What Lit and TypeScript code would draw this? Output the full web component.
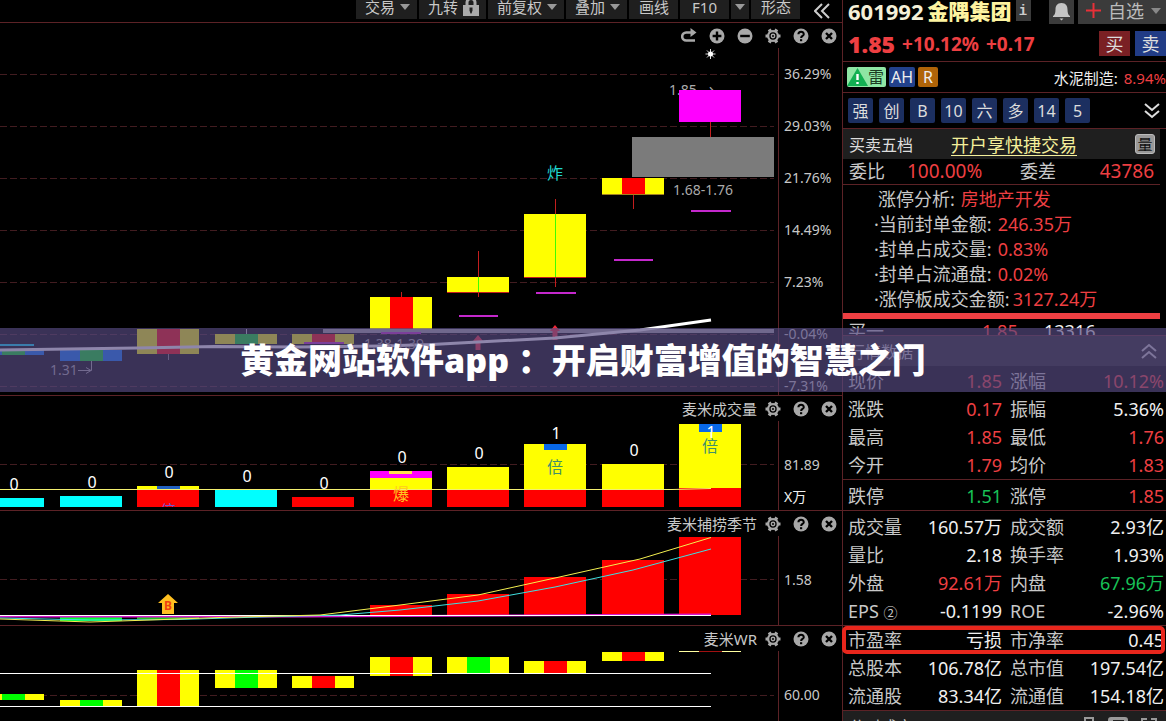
import { LitElement, html, svg, css } from "lit";
import { customElement } from "lit/decorators.js";

type Tone = "red" | "green" | "white";
type Pair = [string, string, Tone];

const COLUMNS = [-18, 60, 137, 215, 292, 370, 447, 524, 602, 679];
const BAR = 62;

const toolbar: { label: string; mark?: "caret" | "lock" }[] = [
  { label: "交易", mark: "caret" },
  { label: "九转", mark: "lock" },
  { label: "前复权", mark: "caret" },
  { label: "叠加", mark: "caret" },
  { label: "画线" },
  { label: "F10" },
  { label: "", mark: "caret" },
  { label: "形态" },
];

const analysis: [string, string][] = [
  ["涨停分析:", "房地产开发"],
  ["·当前封单金额:", "246.35万"],
  ["·封单占成交量:", "0.83%"],
  ["·封单占流通盘:", "0.02%"],
  ["·涨停板成交金额:", "3127.24万"],
];

const quoteGroups: { cls: string; rows: [Pair, Pair][] }[] = [
  {
    cls: "first",
    rows: [
      [["现价", "1.85", "red"], ["涨幅", "10.12%", "red"]],
      [["涨跌", "0.17", "red"], ["振幅", "5.36%", "white"]],
      [["最高", "1.85", "red"], ["最低", "1.76", "red"]],
      [["今开", "1.79", "red"], ["均价", "1.83", "red"]],
    ],
  },
  { cls: "", rows: [[["跌停", "1.51", "green"], ["涨停", "1.85", "red"]]] },
  {
    cls: "",
    rows: [
      [["成交量", "160.57万", "white"], ["成交额", "2.93亿", "white"]],
      [["量比", "2.18", "white"], ["换手率", "1.93%", "white"]],
      [["外盘", "92.61万", "red"], ["内盘", "67.96万", "green"]],
      [["EPS", "-0.1199", "white"], ["ROE", "-2.96%", "white"]],
    ],
  },
  {
    cls: "tight",
    rows: [
      [["市盈率", "亏损", "white"], ["市净率", "0.45", "white"]],
      [["总股本", "106.78亿", "white"], ["总市值", "197.54亿", "white"]],
      [["流通股", "83.34亿", "white"], ["流通值", "154.18亿", "white"]],
    ],
  },
];

const glyphs = {
  redo: svg`<path d="M11 4.500H5.200a4 4 0 0 0 0 8H14" fill="none" stroke="currentColor" stroke-width="2.600"/><path d="M9.500 0 15.500 4.500 9.500 9z" fill="currentColor"/>`,
  plus: svg`<circle cx="8" cy="8" r="7.500" fill="currentColor"/><path d="M8 3.600v8.800M3.600 8h8.800" stroke="#000" stroke-width="2.400"/>`,
  minus: svg`<circle cx="8" cy="8" r="7.500" fill="currentColor"/><path d="M3.200 8h9.600" stroke="#000" stroke-width="2.400"/>`,
  gear: svg`<path d="M0.500 8h15M4.200 1.400l7.600 13.200M11.800 1.400 4.200 14.600" stroke="currentColor" stroke-width="3.200"/><circle cx="8" cy="8" r="6" fill="currentColor"/><circle cx="8" cy="8" r="3.700" fill="#000"/><circle cx="8" cy="8" r="1.700" fill="none" stroke="currentColor" stroke-width="1.400"/>`,
  help: svg`<circle cx="8" cy="8" r="7.500" fill="currentColor"/><path d="M5.400 6.300C5.400 3 10.800 3 10.800 6.200 10.800 8 8.100 7.900 8.100 10" fill="none" stroke="#000" stroke-width="2"/><path d="M7 11.200h2.200v2H7z" fill="#000"/>`,
  close: svg`<circle cx="8" cy="8" r="7.500" fill="currentColor"/><path d="m5 5 6 6M11 5l-6 6" stroke="#000" stroke-width="2.400"/>`,
};
const names: Record<keyof typeof glyphs, string> = {
  redo: "重做", plus: "放大", minus: "缩小", gear: "设置", help: "帮助", close: "关闭",
};

const rect = (x: number, y: number, w: number, h: number, fill: string) =>
  svg`<rect x=${x} y=${y} width=${w} height=${h} fill=${fill}/>`;
const grid = (...ys: number[]) =>
  ys.map((y) => svg`<path d="M0 ${y + 0.5}H774" stroke="#421c20" stroke-dasharray="7 3"/>`);
const body = (col: number, top: number, bottom: number, side: string, core?: string) => svg`
  ${rect(COLUMNS[col], top, BAR, bottom - top, side)}
  ${core ? rect(COLUMNS[col] + 20, top, 23, bottom - top, core) : ""}`;
const wick = (x: number, a: number, b: number, color = "#c41e1e") =>
  svg`<path d="M${x + 0.5} ${a}V${b}" stroke=${color}/>`;

@customElement("app-root")
export class AppRoot extends LitElement {
  static styles = css`
    :host {
      display: grid;
      grid-template-columns: minmax(0, 1fr) 324px;
      position: relative;
      height: 100vh;
      overflow: hidden;
      background: #000;
      color: #c8c8c8;
      font-family: "Noto Sans", "Noto Sans CJK SC", sans-serif;
      font-size: 18px;
      --line: #5c2226;
      --red: #ee3f42;
      --green: #18c257;
      --bar: #1f1f1f;
    }
    * { box-sizing: border-box; }
    button {
      margin: 0; padding: 0; border: 0; background: none;
      color: inherit; font: inherit; cursor: pointer;
    }
    svg { display: block; }
    .red { color: var(--red); }
    .green { color: var(--green); }
    .white { color: #f0f0f0; }

    .charts { display: flex; flex-direction: column; min-width: 0; height: 100vh; }
    .toolbar {
      display: flex; justify-content: flex-end; gap: 2px; flex: none;
      height: 22px; padding-right: 10px; font-size: 15px;
    }
    .tool {
      display: flex; align-items: center; gap: 5px;
      height: 19px; padding: 0 7px 5px 9px; line-height: 14px;
      background: var(--bar); white-space: nowrap;
    }
    .tool.plain { padding: 0 9px 5px 10px; }
    .tool.wide { padding: 0 12px 5px; }
    .tool.only { padding: 0 4px 5px; }
    .fold { width: 30px; padding-left: 12px; }

    .panel { border-top: 1px solid var(--line); flex: none; }
    .panel.last { flex: 1; min-height: 0; }
    .head {
      display: flex; justify-content: flex-end; align-items: center; gap: 12px;
      height: 25px; padding-right: 5px; font-size: 15px;
    }
    .head button { color: #a8a8a8; }
    .head h2 { margin: 0; font-size: 15px; font-weight: 400; line-height: 20px; margin-right: -4px; }
    .plot { display: grid; grid-template-columns: minmax(0, 1fr) 64px; }
    .tall { height: 347px; overflow: hidden; }
    .short { height: 89px; overflow: hidden; }
    .plot svg { width: 100%; }
    .axis { border-left: 1px solid var(--line); padding: 28px 0 0 5px; font-size: 14px; }
    .axis span { display: block; line-height: 32px; }
    .tall .axis { padding-top: 0; }
    .tall .axis span { line-height: 52px; }

    .quote { border-left: 1px solid var(--line); min-width: 0; }
    .name { display: flex; align-items: flex-start; height: 26px; padding-left: 5px; gap: 4px; }
    .name h1 {
      margin: 0; display: flex; gap: 4px; font-size: 22px; line-height: 22px;
      font-weight: 700; color: #f5f0d8;
    }
    .name h1 b { color: #fdf3a0; font-size: 21px; }
    .info {
      width: 15px; height: 21px; background: #3b3b3b; color: #ccc;
      font: 700 14px/20px "Liberation Mono", monospace;
    }
    .bell { width: 25px; height: 24px; margin-left: auto; background: #3b3b3b; }
    .watch {
      display: flex; align-items: center; gap: 7px; height: 24px; padding: 0 5px 3px 8px;
      background: #3b3b3b; line-height: 20px; color: #bbb;
    }
    .price {
      display: flex; align-items: center; height: 36px; gap: 7px;
      padding-left: 5px; font-size: 19px; font-weight: 700; border-bottom: 1px solid var(--line);
    }
    .price strong { font-size: 23px; }
    .buy, .sell {
      width: 31px; height: 25px; background: #7a2024; color: #ddd;
      font-size: 18px; font-weight: 400; line-height: 24px;
    }
    .buy { margin-left: auto; }
    .sell { background: #213c86; margin-left: -2px; }
    .tags {
      display: flex; align-items: center; gap: 3px; height: 31px; padding-left: 4px;
      border-bottom: 1px solid var(--line); font-size: 16px; color: #eee;
    }
    .tag { height: 20px; padding: 0 2px; border-radius: 2px; background: #22418c; line-height: 20px; }
    .mine { display: flex; width: 39px; padding: 0; background: #8fe6a4; color: #1d3a22; }
    .orange { width: 20px; background: #b06408; text-align: center; }
    .tags p { margin: 0 0 0 auto; font-size: 15px; }
    .tags p span { margin-left: 2px; }
    .chips {
      display: flex; align-items: center; gap: 6px; height: 36px; padding: 0 4px 0 5px;
      border-bottom: 1px solid var(--line);
    }
    .chips button {
      width: 25px; height: 25px; border-radius: 2px; background: #1c2f60; color: #ddd;
      font-size: 16px; line-height: 24px;
    }
    .chips .more { margin-left: auto; width: 18px; background: none; }
    .inset { margin-right: 6px; }
    .depth {
      display: flex; align-items: center; height: 30px; padding: 0 5px 0 6px;
      background: var(--bar); font-size: 16px; color: #ddd;
    }
    .depth a { margin-left: 38px; color: #f4ef9b; font-size: 18px; text-underline-offset: 3px; }
    .qty {
      width: 20px; height: 20px; margin-left: auto; border: 1px solid #bbb; border-radius: 3px;
      background: #999; color: #111; font-size: 15px; line-height: 17px;
    }
    .ratio {
      display: grid; grid-template-columns: 58px 113px 1fr auto; height: 26px; line-height: 24px;
      padding: 0 6px 0 6px; border-bottom: 1px solid var(--line);
    }
    .ratio .red { font-size: 19px; }
    .analysis { margin: 0; padding: 2px 0 0 31px; list-style: none; height: 128px; }
    .analysis li { line-height: 25px; white-space: nowrap; }
    .analysis li:first-child { padding-left: 4px; }
    .analysis span { margin-left: 6px; }
    .analysis li:last-child span { margin-left: 3px; }
    .alert { height: 6px; background: var(--red); }
    .bid {
      display: grid; grid-template-columns: 118px 46px 1fr; height: 16px; overflow: hidden;
      padding-left: 5px; line-height: 24px; column-gap: 16px;
    }
    .section {
      display: flex; justify-content: space-between; align-items: center; height: 31px;
      padding: 0 9px 0 6px; border-top: 1px solid var(--line); background: var(--bar); font-size: 16px;
    }
    .figures {
      width: 100%; table-layout: fixed; border-collapse: separate; border-spacing: 0;
      border-top: 1px solid var(--line); padding: 2px 2px 0 5px;
    }
    .figures.first { border-color: transparent; padding-top: 0; }
    .figures.tight { padding-top: 0; }
    .figures tr { height: 28px; position: relative; }
    .figures th, .figures td { padding: 0; line-height: 26px; white-space: nowrap; }
    .figures th { text-align: left; font-weight: 400; width: 60px; }
    .figures td { text-align: right; }
    .figures td + th { width: 68px; padding-left: 8px; }
    .figures sub { font-size: 14px; vertical-align: baseline; font-family: "Noto Sans CJK SC", sans-serif; }
    .marked th:first-child::after {
      content: ""; position: absolute; inset: 0 -1px 0 -6px;
      border: 4px solid #e8261c; border-radius: 5px;
    }
    .tools { display: flex; gap: 13px; }

    .banner {
      position: absolute; left: 0; right: 0; top: 328px; margin: 0; padding: 7px 0;
      background: rgba(87, 74, 129, 0.67); color: #fff; text-align: center;
      font-size: 34px; line-height: 50px; font-weight: 900; white-space: nowrap; overflow: hidden;
    }
  `;

  caret() {
    return html`<svg width="10" height="6" viewBox="0 0 10 6"><path d="M0 0h10L5 6z" fill="#999" /></svg>`;
  }

  lock() {
    return html`<svg width="16" height="18" viewBox="0 0 16 18">
      <path d="M4 8V4.500a4 4 0 0 1 8 0V8" fill="none" stroke="#aaa" stroke-width="3" />
      <path d="M0 7h16v11H0z" fill="#aaa" /><path d="M6.500 9.500h3v3l-1 3h-1l-1-3z" fill="#222" /></svg>`;
  }

  head(title: string, icons: (keyof typeof glyphs)[]) {
    return html`<div class="head">
      ${title ? html`<h2>${title}</h2>` : ""}
      ${icons.map((n) => html`<button aria-label=${names[n]}>
        <svg width="16" height="16" viewBox="0 0 16 16">${glyphs[n]}</svg></button>`)}
    </div>`;
  }

  candles() {
    const ticks: [number, number, number][] = [
      [691, 731, 211], [614, 653, 260], [536, 576, 293], [459, 498, 316], [381, 421, 333], [304, 344, 343],
    ];
    return html`<svg height="347" viewBox="0 48 778 347" font-size="14" fill="#aaa">
      ${grid(74, 126, 178, 230, 282, 334, 386)}
      <text x="669" y="95">1.85 →</text>
      ${rect(0, 344, 34, 2, "#00e0ff")}
      ${body(0, 350, 355, "#0076ff", "#00e020")}
      ${body(1, 350, 361, "#0076ff", "#00e020")}
      ${body(2, 329, 354, "#ff0", "#f00")}
      ${wick(168, 354, 360, "#888")}
      ${wick(246, 329, 334, "#ccc")}
      ${body(3, 334, 344, "#ff0", "#00e020")}
      ${body(4, 334, 344, "#ff0", "#f00")}
      ${wick(401, 292, 297)}
      ${body(5, 297, 329, "#ff0", "#f00")}
      ${wick(478, 251, 297)}
      ${body(6, 277, 292, "#ff0")}
      ${wick(478, 277, 292, "#3bff00")}
      ${rect(447, 292, 62, 1, "#c41e1e")}
      ${wick(555, 199, 287)}
      ${body(7, 214, 277, "#ff0")}
      ${wick(555, 214, 277, "#3bff00")}
      ${rect(524, 277, 62, 1, "#c41e1e")}
      ${wick(633, 194, 209)}
      ${body(8, 178, 194, "#ff0", "#f00")}
      ${rect(602, 194, 62, 1, "#a08020")}
      ${wick(710, 122, 137)}
      ${body(9, 90, 122, "#f0f")}
      ${rect(632, 137, 142, 40, "#7b7b7b")}
      ${rect(323, 329, 451, 4, "#a4a4a4")}
      ${ticks.map(([a, b, y]) => rect(a, y - 1, b - a, 2, "#c428cc"))}
      <path d="M478 335l5 6h-2.500v9h-5v-9H473zM555 325l5 6h-2.500v9h-5v-9H550z" fill="#f02838" />
      <path d="M0 350 137 348 215 346.500 300 347 380 346 432 344.500 478 342 555 338 640 330 711 320"
        fill="none" stroke="#fff" stroke-width="3" />
      <path d="M91.500 361v9.500H78M86 367.500l5 3-5 3" fill="none" stroke="#aaa" />
      <text x="50" y="375">1.31</text>
      <text x="364" y="349">1.38-1.39</text>
      <text x="673" y="195">1.68-1.76</text>
      <text x="547" y="179" font-size="16" fill="#20d8d0">炸</text>
      <path d="M710.500 49v10M705.500 54h10M707 50.500l7 7M714 50.500l-7 7" stroke="#ddd" />
      <circle cx="710.5" cy="54" r="2.500" fill="#fff" />
    </svg>`;
  }

  volume() {
    const counts: [number, number, string][] = [
      [14, 490, "0"], [92, 488, "0"], [169, 478, "0"], [247, 482, "0"], [324, 489, "0"],
      [402, 463, "0"], [479, 459, "0"], [556, 439, "1"], [634, 456, "0"], [711, 438, "1"],
    ];
    return html`<svg height="89" viewBox="0 421 778 89" font-size="16" text-anchor="middle">
      ${grid(464)}
      ${body(0, 498, 507, "#0ff")} ${body(1, 496, 507, "#0ff")}
      ${body(2, 486, 490, "#ff0", "#2060c0")} ${body(2, 489, 507, "#f00")}
      ${body(3, 490, 507, "#0ff")} ${body(4, 497, 507, "#f00")}
      ${body(5, 471, 478, "#f0f")} ${rect(389, 471, 23, 3, "#ffdf50")}
      ${body(5, 478, 490, "#ff0")} ${body(5, 490, 507, "#f00")}
      ${body(6, 467, 490, "#ff0")} ${body(6, 490, 507, "#f00")}
      ${body(7, 444, 490, "#ff0")} ${body(7, 490, 507, "#f00")} ${rect(544, 444, 23, 6, "#0868e8")}
      ${body(8, 464, 490, "#ff0")} ${body(8, 490, 507, "#f00")}
      ${body(9, 424, 489, "#ff0")} ${body(9, 488, 507, "#f00")} ${rect(699, 424, 23, 8, "#0868e8")}
      <path d="M0 489.500H672L711 488.500" fill="none" stroke="#f4f070" />
      ${counts.map(([x, y, n]) => svg`<text x=${x} y=${y} fill="#fff">${n}</text>`)}
      <text x="555" y="473" fill="#40906c">倍</text>
      <text x="710" y="452" fill="#40906c">倍</text>
      <text x="401" y="500" fill="#ffc820">爆</text>
      <svg x="155" y="503" width="26" height="4"><text x="13" y="14" fill="#7a50d0">倍</text></svg>
    </svg>`;
  }

  season() {
    return html`<svg height="89" viewBox="0 536 778 89">
      ${grid(579)}
      ${body(1, 617, 621, "#00ff30")} ${body(2, 617, 619, "#20c020")}
      ${body(5, 605, 615, "#f00")} ${body(6, 594, 615, "#f00")} ${body(7, 577, 615, "#f00")}
      ${body(8, 560, 615, "#f00")} ${body(9, 537, 615, "#f00")}
      <path d="M0 616.500H300L711 614.500" fill="none" stroke="#d818d0" stroke-width="2" />
      <path d="M0 615.500H711" stroke="#fff" />
      <path d="M0 618 90 620 180 619.500 260 617 340 615 400 610 478 601 555 587 633 570 711 549"
        fill="none" stroke="#40e0e0" />
      <path d="M0 619 90 622 150 620 220 617.500 320 615 400 605 478 595 555 578 640 559 711 537.500"
        fill="none" stroke="#f4f050" />
      <path d="M168 594l10 9h-4v11h-12v-11h-4z" fill="#ffc020" />
      <text x="168" y="610" font-size="12" font-weight="700" text-anchor="middle" fill="#f04010">B</text>
    </svg>`;
  }

  wr() {
    return html`<svg height="70" viewBox="0 651 778 70">
      ${grid(695)}
      ${body(0, 694, 700, "#ff0", "#0f0")} ${body(1, 700, 706, "#ff0", "#0f0")}
      ${body(2, 670, 706, "#ff0", "#f00")} ${body(3, 670, 688, "#ff0", "#0f0")}
      ${body(4, 676, 688, "#ff0", "#f00")} ${body(5, 657, 676, "#ff0", "#f00")}
      ${body(6, 657, 673, "#ff0", "#0f0")} ${body(7, 661, 673, "#ff0", "#f00")}
      ${body(8, 652, 661, "#ff0", "#f00")} ${body(9, 651, 652, "#ffffa0", "#a01010")}
      <path d="M0 673.500H711M0 706.500H711" stroke="#fff" />
    </svg>`;
  }

  render() {
    return html`
      <main class="charts">
        <nav class="toolbar">
          ${toolbar.map((t) => html`<button
            class="tool ${!t.label ? "only" : t.label === "F10" ? "wide" : t.mark ? "" : "plain"}"
            aria-label=${t.label || "更多"}>${t.label}${t.mark === "caret" ? this.caret() : t.mark ? this.lock() : ""}</button>`)}
          <button class="fold" aria-label="收起">
            <svg width="16" height="16" viewBox="0 0 16 16"><path d="M8 1 1 8l7 7M15 1 8 8l7 7" fill="none" stroke="#ccc" stroke-width="2" /></svg>
          </button>
        </nav>
        <section class="panel">
          ${this.head("", ["redo", "plus", "minus", "gear", "help", "close"])}
          <div class="plot tall">${this.candles()}
            <div class="axis">${["36.29%", "29.03%", "21.76%", "14.49%", "7.23%", "-0.04%", "-7.31%"].map((v) => html`<span>${v}</span>`)}</div>
          </div>
        </section>
        <section class="panel">
          ${this.head("麦米成交量", ["gear", "help", "close"])}
          <div class="plot short">${this.volume()}
            <div class="axis"><span>81.89</span><span class="white">X万</span></div></div>
        </section>
        <section class="panel">
          ${this.head("麦米捕捞季节", ["gear", "help", "close"])}
          <div class="plot short">${this.season()}<div class="axis"><span>1.58</span></div></div>
        </section>
        <section class="panel last">
          ${this.head("麦米WR", ["gear", "help", "close"])}
          <div class="plot short">${this.wr()}<div class="axis"><span>60.00</span></div></div>
        </section>
      </main>

      <aside class="quote">
        <header class="name">
          <h1>601992<b>金隅集团</b></h1>
          <button class="info" aria-label="信息">i</button>
          <button class="bell" aria-label="提醒">
            <svg width="25" height="24" viewBox="0 0 25 24"><path d="M12.500 3c-4.500 0-6 3-6 6.500 0 4-1 5.500-2.500 6.500v1h17v-1c-1.500-1-2.500-2.500-2.500-6.500 0-3.500-1.500-6.500-6-6.500zM10.500 18.500h4l-2 2z" fill="#c4c4c4" /></svg>
          </button>
          <button class="watch">
            <svg width="15" height="15" viewBox="0 0 15 15"><path d="M7.500 0v15M0 7.500h15" stroke="#e83038" stroke-width="2" /></svg>自选<svg width="10" height="6" viewBox="0 0 10 6"><path d="M0 0h10L5 6z" fill="#888" /></svg>
          </button>
        </header>
        <div class="price red">
          <strong>1.85</strong><span>+10.12%</span><span>+0.17</span>
          <button class="buy">买</button><button class="sell">卖</button>
        </div>
        <div class="tags">
          <span class="tag mine"><svg width="21" height="20" viewBox="0 0 21 20"><path d="M10.500 1 21 19H0z" fill="#12b052" /><path d="M10.500 7v6M10.500 15v2" stroke="#fff" stroke-width="2.400" /></svg>雷</span>
          <span class="tag">AH</span><span class="tag orange">R</span>
          <p>水泥制造: <span class="red">8.94%</span></p>
        </div>
        <div class="chips">
          ${["强", "创", "B", "10", "六", "多", "14", "5"].map((c) => html`<button>${c}</button>`)}
          <button class="more" aria-label="展开"><svg width="16" height="16" viewBox="0 0 16 16"><path d="m1 1 7 6 7-6M1 8l7 6 7-6" fill="none" stroke="#ddd" stroke-width="2" /></svg></button>
        </div>
        <div class="inset">
          <div class="depth"><span>买卖五档</span><a href="#">开户享快捷交易</a><button class="qty">量</button></div>
          <div class="ratio"><span>委比</span><span class="red">100.00%</span><span>委差</span><span class="red">43786</span></div>
          <ul class="analysis">${analysis.map(([k, v]) => html`<li>${k}<span class="red">${v}</span></li>`)}</ul>
          <div class="alert"></div>
        </div>
        <div class="bid"><span>买一</span><span class="red">1.85</span><span class="white">13316</span></div>
        <div class="section"><span>行情数据</span>
          <svg width="16" height="16" viewBox="0 0 16 16"><path d="m1 8 7-6 7 6M1 15l7-6 7 6" fill="none" stroke="#ccc" stroke-width="2" /></svg></div>
        ${quoteGroups.map((g) => html`<table class="figures ${g.cls}"><tbody>
          ${g.rows.map((row) => html`<tr class=${row[0][0] === "市盈率" ? "marked" : ""}>
            ${row.map(([k, v, tone]) => html`<th scope="row">${k}${k === "EPS" ? html` <sub>②</sub>` : ""}</th><td class=${tone}>${v}</td>`)}
          </tr>`)}</tbody></table>`)}
        <div class="section"><span>分时成交</span>
          <span class="tools">
            <svg width="12" height="18" viewBox="0 0 12 18"><path d="M2 1h8v10H2z" fill="none" stroke="#999" stroke-width="2" /></svg>
            <svg width="20" height="18" viewBox="0 0 20 18"><rect width="20" height="18" rx="3" fill="#999" /><path d="M5 4h10v14M5 4v14M5 8h10" fill="none" stroke="#222" stroke-width="2" /></svg>
            <svg width="16" height="18" viewBox="0 0 16 18"><path d="M6 2H1v5M10 2h5v5" fill="none" stroke="#999" stroke-width="2" /></svg>
          </span></div>
      </aside>
      <h1 class="banner">黄金网站软件app ：开启财富增值的智慧之门</h1>
    `;
  }
}
